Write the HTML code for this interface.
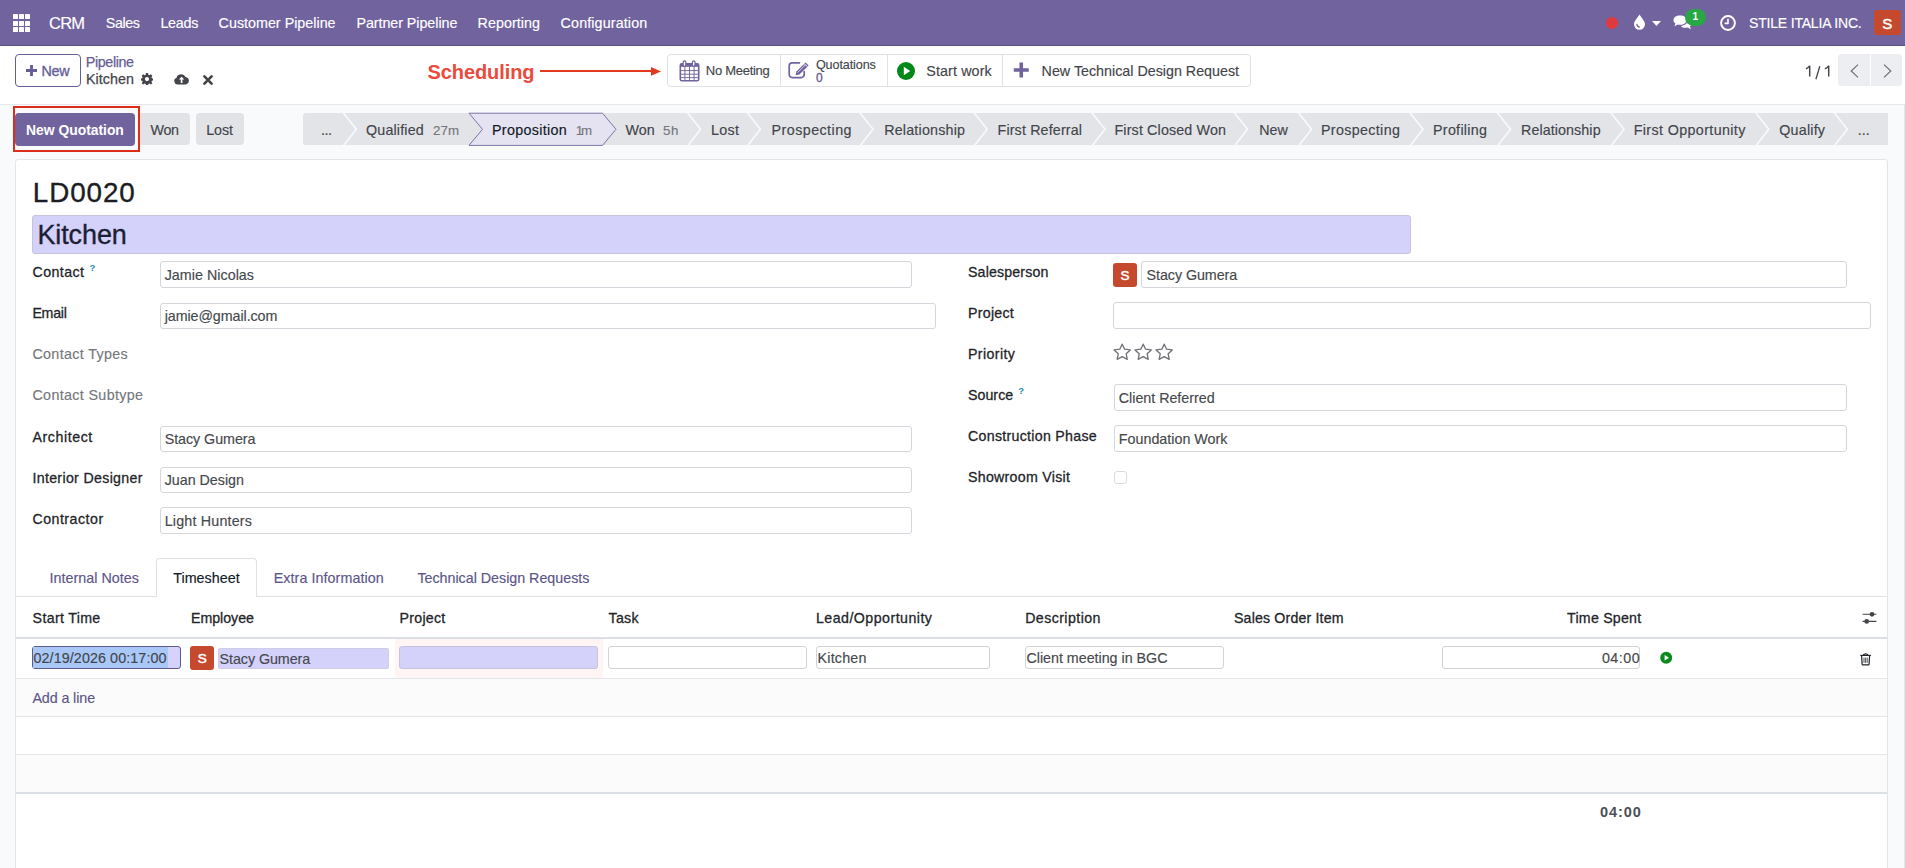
<!DOCTYPE html>
<html><head><meta charset="utf-8"><style>
html,body{margin:0;padding:0;}
body{width:1905px;height:868px;overflow:hidden;position:relative;background:#fff;font-family:"Liberation Sans",sans-serif;}
.t{position:absolute;white-space:nowrap;}
.r{position:absolute;box-sizing:border-box;}
svg{position:absolute;overflow:visible;}
</style></head><body>
<div class="r" style="left:0px;top:0px;width:1905px;height:46px;background:#71639e;"></div>
<div class="r" style="left:0px;top:45px;width:1905px;height:1px;background:#5b4f86;"></div>
<div class="r" style="left:13.0px;top:14.3px;width:4.9px;height:5.0px;background:#fff;border-radius:0.5px;"></div>
<div class="r" style="left:13.0px;top:20.5px;width:4.9px;height:5.0px;background:#fff;border-radius:0.5px;"></div>
<div class="r" style="left:13.0px;top:26.700000000000003px;width:4.9px;height:5.0px;background:#fff;border-radius:0.5px;"></div>
<div class="r" style="left:19.2px;top:14.3px;width:4.9px;height:5.0px;background:#fff;border-radius:0.5px;"></div>
<div class="r" style="left:19.2px;top:20.5px;width:4.9px;height:5.0px;background:#fff;border-radius:0.5px;"></div>
<div class="r" style="left:19.2px;top:26.700000000000003px;width:4.9px;height:5.0px;background:#fff;border-radius:0.5px;"></div>
<div class="r" style="left:25.4px;top:14.3px;width:4.9px;height:5.0px;background:#fff;border-radius:0.5px;"></div>
<div class="r" style="left:25.4px;top:20.5px;width:4.9px;height:5.0px;background:#fff;border-radius:0.5px;"></div>
<div class="r" style="left:25.4px;top:26.700000000000003px;width:4.9px;height:5.0px;background:#fff;border-radius:0.5px;"></div>
<div class="t" style="left:49.00px;top:14.83px;font-size:16.5px;line-height:16.5px;color:#fff;-webkit-text-stroke:0.15px #fff;letter-spacing:-0.788px;">CRM</div>
<div class="t" style="left:105.80px;top:15.90px;font-size:14.3px;line-height:14.3px;color:#fff;-webkit-text-stroke:0.15px #fff;letter-spacing:-0.443px;">Sales</div>
<div class="t" style="left:160.40px;top:15.90px;font-size:14.3px;line-height:14.3px;color:#fff;-webkit-text-stroke:0.15px #fff;letter-spacing:-0.241px;">Leads</div>
<div class="t" style="left:218.60px;top:15.90px;font-size:14.3px;line-height:14.3px;color:#fff;-webkit-text-stroke:0.15px #fff;letter-spacing:0.010px;">Customer Pipeline</div>
<div class="t" style="left:356.40px;top:15.90px;font-size:14.3px;line-height:14.3px;color:#fff;-webkit-text-stroke:0.15px #fff;letter-spacing:-0.050px;">Partner Pipeline</div>
<div class="t" style="left:477.60px;top:15.90px;font-size:14.3px;line-height:14.3px;color:#fff;-webkit-text-stroke:0.15px #fff;letter-spacing:0.049px;">Reporting</div>
<div class="t" style="left:560.60px;top:15.90px;font-size:14.3px;line-height:14.3px;color:#fff;-webkit-text-stroke:0.15px #fff;letter-spacing:0.128px;">Configuration</div>
<div class="r" style="left:1605.7px;top:16.6px;width:12px;height:12px;background:#e0393e;border-radius:50%;"></div>
<div class="t" style="left:1749.00px;top:15.95px;font-size:14px;line-height:14px;color:#fff;-webkit-text-stroke:0.15px #fff;letter-spacing:-0.185px;">STILE ITALIA INC.</div>
<div class="r" style="left:1874.4px;top:10.3px;width:26.4px;height:25.2px;background:#c5492c;border-radius:3px;"></div>
<div class="t" style="left:1882.30px;top:15.50px;font-size:15px;line-height:15px;color:#fff;-webkit-text-stroke:0.5px #fff;">S</div>
<div class="r" style="left:0px;top:46px;width:1905px;height:58px;background:#fff;"></div>
<div class="r" style="left:0px;top:104px;width:1905px;height:1px;background:#e5e7eb;"></div>
<div class="r" style="left:0px;top:105px;width:1905px;height:763px;background:#f9fafb;"></div>
<svg style="left:1633px;top:14px" width="13" height="16" viewBox="0 0 13 16"><path d="M6.5 0.5 C 8.5 4, 12 7, 12 10.3 A 5.5 5.5 0 0 1 1 10.3 C 1 7, 4.5 4, 6.5 0.5 Z" fill="#fff"/><path d="M4 10.5 A 2.6 2.6 0 0 0 6.2 13" stroke="#71639e" stroke-width="1.3" fill="none" stroke-linecap="round"/></svg>
<svg style="left:1652px;top:20.5px" width="9" height="5" viewBox="0 0 9 5"><path d="M0 0 L9 0 L4.5 5 Z" fill="#fff"/></svg>
<svg style="left:1672.5px;top:14.5px" width="19" height="15" viewBox="0 0 19 15"><path d="M7 0.5 C 11 0.5 13.5 2.6 13.5 5.2 C 13.5 7.8 11 9.8 7 9.8 C 6.2 9.8 5.5 9.7 4.8 9.5 L 1.5 11.2 L 2.4 8.4 C 1.2 7.5 0.5 6.4 0.5 5.2 C 0.5 2.6 3 0.5 7 0.5 Z" fill="#fff"/><path d="M14.5 4 C 17 4.8 18.5 6.4 18.5 8.4 C 18.5 9.5 18 10.5 17 11.3 L 17.8 14.2 L 14.6 12.6 C 14 12.8 13.3 12.8 12.6 12.8 C 10.5 12.8 8.8 12.1 7.8 10.9 C 11.8 10.7 14.7 8.4 14.7 5.3 Z" fill="#fff"/></svg>
<div class="r" style="left:1684.9px;top:8.9px;width:21.3px;height:17.4px;background:#28a745;border-radius:9px;"></div>
<div class="t" style="left:1692.40px;top:12.34px;font-size:10px;line-height:10px;color:#fff;font-weight:bold;">1</div>
<svg style="left:1719.5px;top:14.5px" width="16" height="16" viewBox="0 0 16 16"><circle cx="8" cy="8" r="6.9" stroke="#fff" stroke-width="2" fill="none"/><path d="M8 4.2 V8.4 H5.3" stroke="#fff" stroke-width="1.6" fill="none" stroke-linecap="round" stroke-linejoin="round"/></svg>
<div class="r" style="left:15.1px;top:54px;width:65.5px;height:32.9px;border:1px solid #665e96;border-radius:4px;background:#fff;"></div>
<svg style="left:26px;top:65px" width="11" height="11" viewBox="0 0 11 11"><path d="M5.5 0 V11 M0 5.5 H11" stroke="#665e96" stroke-width="2.9"/></svg>
<div class="t" style="left:41.60px;top:63.90px;font-size:14.3px;line-height:14.3px;color:#665e96;-webkit-text-stroke:0.35px #665e96;letter-spacing:-0.303px;">New</div>
<div class="t" style="left:85.80px;top:55.30px;font-size:14.3px;line-height:14.3px;color:#665e96;-webkit-text-stroke:0.25px #665e96;letter-spacing:-0.383px;">Pipeline</div>
<div class="t" style="left:86.00px;top:71.90px;font-size:14.3px;line-height:14.3px;color:#43454a;-webkit-text-stroke:0.25px #43454a;letter-spacing:0.051px;">Kitchen</div>
<svg style="left:140.9px;top:73.2px" width="12" height="12" viewBox="0 0 16 16"><path fill="#43454a" fill-rule="evenodd" d="M6.6 0 H9.4 L9.8 2.2 L11.3 2.9 L13.2 1.6 L15.2 3.6 L13.9 5.5 L14.5 7 L16 7.3 V9.9 L14.5 10.2 L13.9 11.6 L15.2 13.5 L13.3 15.4 L11.4 14.1 L9.9 14.7 L9.5 16 H6.6 L6.2 14.7 L4.7 14.1 L2.8 15.4 L0.9 13.5 L2.2 11.6 L1.6 10.2 L0 9.9 V7.3 L1.6 7 L2.2 5.5 L0.9 3.6 L2.9 1.6 L4.8 2.9 L6.3 2.2 Z M8 5.3 A2.8 2.8 0 1 0 8 10.9 A2.8 2.8 0 1 0 8 5.3 Z"/></svg>
<svg style="left:173.8px;top:72.8px" width="15.2" height="11.4" viewBox="0 0 15.2 11.4"><path fill="#43454a" d="M3.4 11.4 A3.3 3.3 0 0 1 2.4 5 A5 5 0 0 1 11.6 3.9 A3.8 3.8 0 0 1 11.8 11.4 Z"/><path d="M7.6 10 V5.6" stroke="#fff" stroke-width="1.7"/><path d="M4.9 6.6 L7.6 3.7 L10.3 6.6 Z" fill="#fff"/></svg>
<svg style="left:202.5px;top:74.8px" width="10" height="10" viewBox="0 0 10 10"><path d="M1.4 1.4 L8.6 8.6 M8.6 1.4 L1.4 8.6" stroke="#43454a" stroke-width="2.7" stroke-linecap="round"/></svg>
<div class="t" style="left:427.50px;top:61.97px;font-size:20px;line-height:20px;color:#ea4b3c;font-weight:bold;letter-spacing:-0.087px;">Scheduling</div>
<div class="r" style="left:540px;top:70.0px;width:112px;height:1.8px;background:#e5391f;"></div>
<svg style="left:650.5px;top:66.5px" width="10" height="8.8" viewBox="0 0 10 8.8"><path d="M0 0 L10 4.4 L0 8.8 Z" fill="#e5391f"/></svg>
<div class="r" style="left:667.2px;top:54.4px;width:583.6px;height:32.2px;border:1px solid #dfe1e5;border-radius:4px;background:#fff;"></div>
<div class="r" style="left:780px;top:55px;width:1px;height:31px;background:#dfe1e5;"></div>
<div class="r" style="left:887px;top:55px;width:1px;height:31px;background:#dfe1e5;"></div>
<div class="r" style="left:1002px;top:55px;width:1px;height:31px;background:#dfe1e5;"></div>
<svg style="left:679px;top:59.5px" width="21" height="22" viewBox="0 0 21 22"><rect x="1.3" y="3.8" width="18.4" height="17" rx="1.6" fill="#fff" stroke="#71639e" stroke-width="1.6"/><rect x="1.3" y="3.8" width="18.4" height="3" fill="#71639e"/><path d="M1.3 10.6 H19.7 M1.3 14.2 H19.7 M1.3 17.6 H19.7 M5.9 6.5 V20.8 M10.5 6.5 V20.8 M15.1 6.5 V20.8" stroke="#71639e" stroke-width="0.95"/><rect x="4.2" y="0.8" width="2.6" height="5.6" rx="1.3" fill="#fff" stroke="#71639e" stroke-width="1.2"/><rect x="13.4" y="0.8" width="2.6" height="5.6" rx="1.3" fill="#fff" stroke="#71639e" stroke-width="1.2"/></svg>
<div class="t" style="left:705.80px;top:64.20px;font-size:13px;line-height:13px;color:#43454a;-webkit-text-stroke:0.15px #43454a;letter-spacing:-0.275px;">No Meeting</div>
<svg style="left:788px;top:61px" width="22" height="18" viewBox="0 0 22 18"><path d="M11.5 1.8 H4.2 A3 3 0 0 0 1.2 4.8 V13.6 A3 3 0 0 0 4.2 16.6 H13.2 A3 3 0 0 0 16.2 13.6 V10.5" fill="none" stroke="#71639e" stroke-width="1.7" stroke-linecap="round"/><path d="M7.6 14.2 L8.4 10.6 L17.6 1.4 L20.6 4.4 L11.4 13.6 Z" fill="#71639e"/><path d="M9.6 11.6 L17.4 3.8" stroke="#fff" stroke-width="0.7"/><path d="M16.3 2.7 L19.3 5.7" stroke="#fff" stroke-width="0.9"/></svg>
<div class="t" style="left:815.90px;top:58.63px;font-size:12.6px;line-height:12.6px;color:#43454a;-webkit-text-stroke:0.15px #43454a;letter-spacing:-0.104px;">Quotations</div>
<div class="t" style="left:816.10px;top:71.64px;font-size:12px;line-height:12px;color:#665e96;-webkit-text-stroke:0.35px #665e96;">0</div>
<svg style="left:897px;top:61.6px" width="18" height="18" viewBox="0 0 18 18"><circle cx="9" cy="9" r="9" fill="#008818"/><path d="M6.8 4.8 L13.2 9 L6.8 13.2 Z" fill="#fff"/></svg>
<div class="t" style="left:926.30px;top:63.90px;font-size:14.3px;line-height:14.3px;color:#43454a;-webkit-text-stroke:0.15px #43454a;letter-spacing:0.115px;">Start work</div>
<svg style="left:1012.7px;top:62px" width="16.5" height="16" viewBox="0 0 16 16"><path d="M8 0.5 V15.5 M0.5 8 H15.5" stroke="#71639e" stroke-width="3.6"/></svg>
<div class="t" style="left:1041.60px;top:63.90px;font-size:14.3px;line-height:14.3px;color:#43454a;-webkit-text-stroke:0.15px #43454a;letter-spacing:-0.006px;">New Technical Design Request</div>
<svg style="left:1805px;top:65.5px" width="26" height="14" viewBox="0 0 26 14"><path d="M4.7 10.6 V0.3 H4.2 C3.6 1.6 2.4 2.4 0.9 2.8" stroke="#43454a" stroke-width="1.45" fill="none" stroke-linejoin="round"/><path d="M14.8 0.3 L10.9 13.2" stroke="#43454a" stroke-width="1.3"/><path d="M23.7 10.6 V0.3 H23.2 C22.6 1.6 21.4 2.4 19.9 2.8" stroke="#43454a" stroke-width="1.45" fill="none" stroke-linejoin="round"/></svg>
<div class="r" style="left:1838.4px;top:54.3px;width:31.2px;height:32.2px;background:#eceef1;border-radius:4px 0 0 4px;"></div>
<div class="r" style="left:1871px;top:54.3px;width:30.7px;height:32.2px;background:#eceef1;border-radius:0 4px 4px 0;"></div>
<svg style="left:1850px;top:64px" width="9" height="14" viewBox="0 0 9 14"><path d="M8 0.7 L1.2 7 L8 13.3" stroke="#6b6f76" stroke-width="1.15" fill="none"/></svg>
<svg style="left:1882.5px;top:64px" width="9" height="14" viewBox="0 0 9 14"><path d="M1 0.7 L7.8 7 L1 13.3" stroke="#6b6f76" stroke-width="1.15" fill="none"/></svg>
<div class="r" style="left:1904px;top:104px;width:1px;height:764px;background:#e5e7eb;"></div>
<div class="r" style="left:13.1px;top:106.2px;width:126.6px;height:45.4px;border:2px solid #dc2d1a;"></div>
<div class="r" style="left:15.2px;top:113px;width:119.4px;height:33px;background:#71639e;border-radius:4px;"></div>
<div class="t" style="left:26.10px;top:123.53px;font-size:13.9px;line-height:13.9px;color:#fff;font-weight:bold;letter-spacing:-0.022px;">New Quotation</div>
<div class="r" style="left:140.3px;top:113.1px;width:50.1px;height:32.4px;background:#e1e3e7;border-radius:0 4px 4px 0;"></div>
<div class="t" style="left:150.50px;top:123.20px;font-size:14.3px;line-height:14.3px;color:#43454a;-webkit-text-stroke:0.15px #43454a;letter-spacing:-0.323px;">Won</div>
<div class="r" style="left:195.6px;top:113.1px;width:48.9px;height:32.4px;background:#e1e3e7;border-radius:4px;"></div>
<div class="t" style="left:206.20px;top:123.20px;font-size:14.3px;line-height:14.3px;color:#43454a;-webkit-text-stroke:0.15px #43454a;letter-spacing:-0.077px;">Lost</div>
<div class="r" style="left:302.8px;top:113.2px;width:1585.2px;height:32.2px;background:#e2e4e8;border-radius:3px 0 0 3px;"></div>
<svg style="left:0;top:0" width="1905" height="868"><polygon points="469,113.2 602.5,113.2 616,129.3 602.5,145.4 469,145.4 482.5,129.3" fill="#e5e3f1" stroke="#7e74a8" stroke-width="1"/><polyline points="342.8,112.2 356.3,129.3 342.8,146.4" fill="none" stroke="#f9fafb" stroke-width="1.6"/><polyline points="687.1,112.2 700.6,129.3 687.1,146.4" fill="none" stroke="#f9fafb" stroke-width="1.6"/><polyline points="746.9,112.2 760.4,129.3 746.9,146.4" fill="none" stroke="#f9fafb" stroke-width="1.6"/><polyline points="859.5,112.2 873,129.3 859.5,146.4" fill="none" stroke="#f9fafb" stroke-width="1.6"/><polyline points="973.7,112.2 987.2,129.3 973.7,146.4" fill="none" stroke="#f9fafb" stroke-width="1.6"/><polyline points="1091.5,112.2 1105,129.3 1091.5,146.4" fill="none" stroke="#f9fafb" stroke-width="1.6"/><polyline points="1234.0,112.2 1247.5,129.3 1234.0,146.4" fill="none" stroke="#f9fafb" stroke-width="1.6"/><polyline points="1298.1,112.2 1311.6,129.3 1298.1,146.4" fill="none" stroke="#f9fafb" stroke-width="1.6"/><polyline points="1409.5,112.2 1423,129.3 1409.5,146.4" fill="none" stroke="#f9fafb" stroke-width="1.6"/><polyline points="1497.0,112.2 1510.5,129.3 1497.0,146.4" fill="none" stroke="#f9fafb" stroke-width="1.6"/><polyline points="1610.5,112.2 1624,129.3 1610.5,146.4" fill="none" stroke="#f9fafb" stroke-width="1.6"/><polyline points="1755.3,112.2 1768.8,129.3 1755.3,146.4" fill="none" stroke="#f9fafb" stroke-width="1.6"/><polyline points="1833.8,112.2 1847.3,129.3 1833.8,146.4" fill="none" stroke="#f9fafb" stroke-width="1.6"/></svg>
<div class="t" style="left:321.00px;top:123.20px;font-size:14.3px;line-height:14.3px;color:#43454a;-webkit-text-stroke:0.15px #43454a;letter-spacing:-0.460px;">...</div>
<div class="t" style="left:366.00px;top:123.20px;font-size:14.3px;line-height:14.3px;color:#43454a;-webkit-text-stroke:0.15px #43454a;letter-spacing:0.158px;">Qualified</div>
<div class="t" style="left:433.00px;top:124.04px;font-size:13.3px;line-height:13.3px;color:#75777b;-webkit-text-stroke:0.15px #75777b;letter-spacing:0.163px;">27m</div>
<div class="t" style="left:492.00px;top:123.20px;font-size:14.3px;line-height:14.3px;color:#111827;-webkit-text-stroke:0.15px #111827;letter-spacing:0.316px;">Proposition</div>
<div class="t" style="left:575.70px;top:124.04px;font-size:13.3px;line-height:13.3px;color:#75777b;-webkit-text-stroke:0.15px #75777b;letter-spacing:-1.977px;">1m</div>
<div class="t" style="left:625.60px;top:123.20px;font-size:14.3px;line-height:14.3px;color:#43454a;-webkit-text-stroke:0.15px #43454a;letter-spacing:-0.073px;">Won</div>
<div class="t" style="left:663.00px;top:124.04px;font-size:13.3px;line-height:13.3px;color:#75777b;-webkit-text-stroke:0.15px #75777b;letter-spacing:0.706px;">5h</div>
<div class="t" style="left:711.00px;top:123.20px;font-size:14.3px;line-height:14.3px;color:#43454a;-webkit-text-stroke:0.15px #43454a;letter-spacing:0.290px;">Lost</div>
<div class="t" style="left:771.60px;top:123.20px;font-size:14.3px;line-height:14.3px;color:#43454a;-webkit-text-stroke:0.15px #43454a;letter-spacing:0.438px;">Prospecting</div>
<div class="t" style="left:884.20px;top:123.20px;font-size:14.3px;line-height:14.3px;color:#43454a;-webkit-text-stroke:0.15px #43454a;letter-spacing:0.191px;">Relationship</div>
<div class="t" style="left:997.50px;top:123.20px;font-size:14.3px;line-height:14.3px;color:#43454a;-webkit-text-stroke:0.15px #43454a;letter-spacing:0.144px;">First Referral</div>
<div class="t" style="left:1114.50px;top:123.20px;font-size:14.3px;line-height:14.3px;color:#43454a;-webkit-text-stroke:0.15px #43454a;letter-spacing:0.140px;">First Closed Won</div>
<div class="t" style="left:1259.20px;top:123.20px;font-size:14.3px;line-height:14.3px;color:#43454a;-webkit-text-stroke:0.15px #43454a;letter-spacing:-0.003px;">New</div>
<div class="t" style="left:1321.00px;top:123.20px;font-size:14.3px;line-height:14.3px;color:#43454a;-webkit-text-stroke:0.15px #43454a;letter-spacing:0.338px;">Prospecting</div>
<div class="t" style="left:1433.00px;top:123.20px;font-size:14.3px;line-height:14.3px;color:#43454a;-webkit-text-stroke:0.15px #43454a;letter-spacing:0.292px;">Profiling</div>
<div class="t" style="left:1521.00px;top:123.20px;font-size:14.3px;line-height:14.3px;color:#43454a;-webkit-text-stroke:0.15px #43454a;letter-spacing:0.082px;">Relationship</div>
<div class="t" style="left:1633.70px;top:123.20px;font-size:14.3px;line-height:14.3px;color:#43454a;-webkit-text-stroke:0.15px #43454a;letter-spacing:0.375px;">First Opportunity</div>
<div class="t" style="left:1779.30px;top:123.20px;font-size:14.3px;line-height:14.3px;color:#43454a;-webkit-text-stroke:0.15px #43454a;letter-spacing:0.199px;">Qualify</div>
<div class="t" style="left:1857.80px;top:123.20px;font-size:14.3px;line-height:14.3px;color:#43454a;-webkit-text-stroke:0.15px #43454a;letter-spacing:0.040px;">...</div>
<div class="r" style="left:15px;top:158.8px;width:1873px;height:760px;background:#fff;border:1px solid #e3e5e8;border-radius:3px;"></div>
<div class="t" style="left:32.80px;top:179.07px;font-size:27.8px;line-height:27.8px;color:#1a1d21;-webkit-text-stroke:0.35px #1a1d21;letter-spacing:0.924px;">LD0020</div>
<div class="r" style="left:32.3px;top:215.2px;width:1378.5px;height:39.2px;background:#d4d2fb;border-radius:3px;border:1px solid #c5c4dc;"></div>
<div class="t" style="left:37.40px;top:221.74px;font-size:27px;line-height:27px;color:#1c1f33;-webkit-text-stroke:0.35px #1c1f33;letter-spacing:-0.093px;">Kitchen</div>
<div class="t" style="left:32.60px;top:264.78px;font-size:14.2px;line-height:14.2px;color:#222428;-webkit-text-stroke:0.28px #222428;letter-spacing:0.394px;">Contact</div>
<div class="t" style="left:89.60px;top:263.46px;font-size:9.5px;line-height:9.5px;color:#1a8fb0;font-weight:bold;">?</div>
<div class="r" style="left:159.5px;top:261.1px;width:752.5px;height:27px;border:1px solid #d4d6db;border-radius:3px;background:#fff;"></div>
<div class="t" style="left:164.70px;top:268.10px;font-size:14.3px;line-height:14.3px;color:#46484c;-webkit-text-stroke:0.15px #46484c;letter-spacing:0.025px;">Jamie Nicolas</div>
<div class="t" style="left:32.40px;top:305.98px;font-size:14.2px;line-height:14.2px;color:#222428;-webkit-text-stroke:0.28px #222428;letter-spacing:-0.252px;">Email</div>
<div class="r" style="left:159.5px;top:302.5px;width:776.5px;height:26.5px;border:1px solid #d4d6db;border-radius:3px;background:#fff;"></div>
<div class="t" style="left:164.70px;top:308.50px;font-size:14.3px;line-height:14.3px;color:#46484c;-webkit-text-stroke:0.15px #46484c;letter-spacing:-0.082px;">jamie@gmail.com</div>
<div class="t" style="left:32.40px;top:347.40px;font-size:14.3px;line-height:14.3px;color:#75777b;-webkit-text-stroke:0.15px #75777b;letter-spacing:0.346px;">Contact Types</div>
<div class="t" style="left:32.40px;top:388.40px;font-size:14.3px;line-height:14.3px;color:#75777b;-webkit-text-stroke:0.15px #75777b;letter-spacing:0.355px;">Contact Subtype</div>
<div class="t" style="left:32.40px;top:429.98px;font-size:14.2px;line-height:14.2px;color:#222428;-webkit-text-stroke:0.28px #222428;letter-spacing:0.583px;">Architect</div>
<div class="r" style="left:159.5px;top:425.6px;width:752.5px;height:26.5px;border:1px solid #d4d6db;border-radius:3px;background:#fff;"></div>
<div class="t" style="left:164.70px;top:432.40px;font-size:14.3px;line-height:14.3px;color:#46484c;-webkit-text-stroke:0.15px #46484c;letter-spacing:-0.054px;">Stacy Gumera</div>
<div class="t" style="left:32.40px;top:470.98px;font-size:14.2px;line-height:14.2px;color:#222428;-webkit-text-stroke:0.28px #222428;letter-spacing:0.327px;">Interior Designer</div>
<div class="r" style="left:159.5px;top:466.5px;width:752.5px;height:26.5px;border:1px solid #d4d6db;border-radius:3px;background:#fff;"></div>
<div class="t" style="left:164.70px;top:473.40px;font-size:14.3px;line-height:14.3px;color:#46484c;-webkit-text-stroke:0.15px #46484c;letter-spacing:-0.020px;">Juan Design</div>
<div class="t" style="left:32.40px;top:511.98px;font-size:14.2px;line-height:14.2px;color:#222428;-webkit-text-stroke:0.28px #222428;letter-spacing:0.501px;">Contractor</div>
<div class="r" style="left:159.5px;top:507.4px;width:752.5px;height:26.5px;border:1px solid #d4d6db;border-radius:3px;background:#fff;"></div>
<div class="t" style="left:164.70px;top:514.30px;font-size:14.3px;line-height:14.3px;color:#46484c;-webkit-text-stroke:0.15px #46484c;letter-spacing:0.187px;">Light Hunters</div>
<div class="t" style="left:968.00px;top:265.38px;font-size:14.2px;line-height:14.2px;color:#222428;-webkit-text-stroke:0.28px #222428;letter-spacing:0.146px;">Salesperson</div>
<div class="r" style="left:1113.1px;top:263.3px;width:23.5px;height:23.3px;background:#c5492c;border-radius:3px;"></div>
<div class="t" style="left:1120.40px;top:268.97px;font-size:13.5px;line-height:13.5px;color:#fff;-webkit-text-stroke:0.5px #fff;">S</div>
<div class="r" style="left:1141.2px;top:261.2px;width:705.8px;height:26.5px;border:1px solid #d4d6db;border-radius:3px;background:#fff;"></div>
<div class="t" style="left:1146.50px;top:268.30px;font-size:14.3px;line-height:14.3px;color:#46484c;-webkit-text-stroke:0.15px #46484c;letter-spacing:-0.054px;">Stacy Gumera</div>
<div class="t" style="left:968.00px;top:306.38px;font-size:14.2px;line-height:14.2px;color:#222428;-webkit-text-stroke:0.28px #222428;letter-spacing:0.268px;">Project</div>
<div class="r" style="left:1113.1px;top:302.3px;width:757.7px;height:26.5px;border:1px solid #d4d6db;border-radius:3px;background:#fff;"></div>
<div class="t" style="left:968.00px;top:347.18px;font-size:14.2px;line-height:14.2px;color:#222428;-webkit-text-stroke:0.28px #222428;letter-spacing:0.403px;">Priority</div>
<svg style="left:1112.6px;top:342.6px" width="18.4" height="17.6" viewBox="0 0 24 23"><path d="M12 1.6 L15.2 8.1 L22.6 9.1 L17.2 14.1 L18.6 21.3 L12 17.8 L5.4 21.3 L6.8 14.1 L1.4 9.1 L8.8 8.1 Z" fill="none" stroke="#6f7176" stroke-width="1.75" stroke-linejoin="round"/></svg>
<svg style="left:1133.8999999999999px;top:342.6px" width="18.4" height="17.6" viewBox="0 0 24 23"><path d="M12 1.6 L15.2 8.1 L22.6 9.1 L17.2 14.1 L18.6 21.3 L12 17.8 L5.4 21.3 L6.8 14.1 L1.4 9.1 L8.8 8.1 Z" fill="none" stroke="#6f7176" stroke-width="1.75" stroke-linejoin="round"/></svg>
<svg style="left:1155.1999999999998px;top:342.6px" width="18.4" height="17.6" viewBox="0 0 24 23"><path d="M12 1.6 L15.2 8.1 L22.6 9.1 L17.2 14.1 L18.6 21.3 L12 17.8 L5.4 21.3 L6.8 14.1 L1.4 9.1 L8.8 8.1 Z" fill="none" stroke="#6f7176" stroke-width="1.75" stroke-linejoin="round"/></svg>
<div class="t" style="left:968.00px;top:387.88px;font-size:14.2px;line-height:14.2px;color:#222428;-webkit-text-stroke:0.28px #222428;letter-spacing:0.042px;">Source</div>
<div class="t" style="left:1018.30px;top:386.46px;font-size:9.5px;line-height:9.5px;color:#1a8fb0;font-weight:bold;">?</div>
<div class="r" style="left:1113.5px;top:384.3px;width:733.5px;height:26.3px;border:1px solid #d4d6db;border-radius:3px;background:#fff;"></div>
<div class="t" style="left:1118.80px;top:391.10px;font-size:14.3px;line-height:14.3px;color:#46484c;-webkit-text-stroke:0.15px #46484c;letter-spacing:-0.026px;">Client Referred</div>
<div class="t" style="left:968.00px;top:429.18px;font-size:14.2px;line-height:14.2px;color:#222428;-webkit-text-stroke:0.28px #222428;letter-spacing:0.287px;">Construction Phase</div>
<div class="r" style="left:1113.5px;top:425.3px;width:733.5px;height:26.3px;border:1px solid #d4d6db;border-radius:3px;background:#fff;"></div>
<div class="t" style="left:1118.80px;top:432.10px;font-size:14.3px;line-height:14.3px;color:#46484c;-webkit-text-stroke:0.15px #46484c;letter-spacing:0.005px;">Foundation Work</div>
<div class="t" style="left:968.00px;top:470.08px;font-size:14.2px;line-height:14.2px;color:#222428;-webkit-text-stroke:0.28px #222428;letter-spacing:0.278px;">Showroom Visit</div>
<div class="r" style="left:1113.5px;top:470.5px;width:13.2px;height:13.2px;border:1px solid #d8dbe0;border-radius:3px;background:#fff;"></div>
<div class="r" style="left:16px;top:596px;width:1871px;height:1px;background:#dee2e6;"></div>
<div class="r" style="left:156px;top:558.4px;width:100.5px;height:38.6px;background:#fff;border:1px solid #dee2e6;border-bottom:none;border-radius:4px 4px 0 0;"></div>
<div class="t" style="left:49.50px;top:571.10px;font-size:14.3px;line-height:14.3px;color:#5b5689;-webkit-text-stroke:0.15px #5b5689;letter-spacing:0.036px;">Internal Notes</div>
<div class="t" style="left:173.20px;top:571.10px;font-size:14.3px;line-height:14.3px;color:#111827;-webkit-text-stroke:0.15px #111827;letter-spacing:0.046px;">Timesheet</div>
<div class="t" style="left:273.70px;top:571.10px;font-size:14.3px;line-height:14.3px;color:#5b5689;-webkit-text-stroke:0.15px #5b5689;letter-spacing:0.070px;">Extra Information</div>
<div class="t" style="left:417.40px;top:571.10px;font-size:14.3px;line-height:14.3px;color:#5b5689;-webkit-text-stroke:0.15px #5b5689;letter-spacing:-0.020px;">Technical Design Requests</div>
<div class="t" style="left:32.60px;top:611.28px;font-size:14.2px;line-height:14.2px;color:#222428;-webkit-text-stroke:0.28px #222428;letter-spacing:0.333px;">Start Time</div>
<div class="t" style="left:191.00px;top:611.28px;font-size:14.2px;line-height:14.2px;color:#222428;-webkit-text-stroke:0.28px #222428;letter-spacing:-0.020px;">Employee</div>
<div class="t" style="left:399.50px;top:611.28px;font-size:14.2px;line-height:14.2px;color:#222428;-webkit-text-stroke:0.28px #222428;letter-spacing:0.268px;">Project</div>
<div class="t" style="left:608.60px;top:611.28px;font-size:14.2px;line-height:14.2px;color:#222428;-webkit-text-stroke:0.28px #222428;letter-spacing:0.268px;">Task</div>
<div class="t" style="left:816.00px;top:611.28px;font-size:14.2px;line-height:14.2px;color:#222428;-webkit-text-stroke:0.28px #222428;letter-spacing:0.471px;">Lead/Opportunity</div>
<div class="t" style="left:1025.20px;top:611.28px;font-size:14.2px;line-height:14.2px;color:#222428;-webkit-text-stroke:0.28px #222428;letter-spacing:0.427px;">Description</div>
<div class="t" style="left:1234.00px;top:611.28px;font-size:14.2px;line-height:14.2px;color:#222428;-webkit-text-stroke:0.28px #222428;letter-spacing:0.152px;">Sales Order Item</div>
<div class="t" style="left:1567.10px;top:611.28px;font-size:14.2px;line-height:14.2px;color:#222428;-webkit-text-stroke:0.28px #222428;letter-spacing:0.224px;">Time Spent</div>
<svg style="left:1862px;top:610px" width="15" height="14" viewBox="0 0 15 14"><path d="M0.6 4.3 H14.4 M0.6 11.4 H14.4" stroke="#43454a" stroke-width="1.1"/><circle cx="10" cy="4.3" r="2.4" fill="#43454a"/><circle cx="4.7" cy="11.4" r="2.4" fill="#43454a"/></svg>
<div class="r" style="left:16px;top:636.8px;width:1871px;height:2px;background:#dcdfe3;"></div>
<div class="r" style="left:16px;top:678px;width:1871px;height:1px;background:#e3e5e8;"></div>
<div class="r" style="left:394.5px;top:639px;width:208.3px;height:39px;background:#fff5f5;"></div>
<div class="r" style="left:32.3px;top:646.3px;width:148.3px;height:22.6px;background:#d5d3fb;border:1px solid #5d5a8c;border-radius:3px;"></div>
<div class="r" style="left:33.3px;top:647.3px;width:134.7px;height:20.6px;background:#a9c8f8;"></div>
<div class="t" style="left:33.50px;top:651.30px;font-size:14.3px;line-height:14.3px;color:#43454a;-webkit-text-stroke:0.15px #43454a;letter-spacing:0.099px;">02/19/2026 00:17:00</div>
<div class="r" style="left:190.3px;top:646.3px;width:23.7px;height:23.4px;background:#c5492c;border-radius:3px;"></div>
<div class="t" style="left:197.80px;top:651.97px;font-size:13.5px;line-height:13.5px;color:#fff;-webkit-text-stroke:0.5px #fff;">S</div>
<div class="r" style="left:218.4px;top:647.6px;width:170.2px;height:21.8px;background:#d4d2fb;border-radius:2px;border:1px solid #cfcde6;"></div>
<div class="t" style="left:219.50px;top:651.90px;font-size:14.3px;line-height:14.3px;color:#46484c;-webkit-text-stroke:0.15px #46484c;letter-spacing:-0.054px;">Stacy Gumera</div>
<div class="r" style="left:399px;top:646.3px;width:199px;height:22.4px;background:#d4d2fb;border-radius:3px;border:1px solid #c5c4dc;"></div>
<div class="r" style="left:608px;top:646.3px;width:198.5px;height:22.4px;border:1px solid #d0d3d8;border-radius:3px;background:#fff;"></div>
<div class="r" style="left:816px;top:646.3px;width:173.6px;height:22.4px;border:1px solid #d0d3d8;border-radius:3px;background:#fff;"></div>
<div class="t" style="left:817.50px;top:651.30px;font-size:14.3px;line-height:14.3px;color:#46484c;-webkit-text-stroke:0.15px #46484c;letter-spacing:0.217px;">Kitchen</div>
<div class="r" style="left:1025.2px;top:646.3px;width:198.5px;height:22.4px;border:1px solid #d0d3d8;border-radius:3px;background:#fff;"></div>
<div class="t" style="left:1026.50px;top:651.30px;font-size:14.3px;line-height:14.3px;color:#46484c;-webkit-text-stroke:0.15px #46484c;letter-spacing:-0.024px;">Client meeting in BGC</div>
<div class="r" style="left:1442.4px;top:646.3px;width:198px;height:22.4px;border:1px solid #d0d3d8;border-radius:3px;background:#fff;"></div>
<div class="t" style="left:1601.90px;top:651.20px;font-size:14.3px;line-height:14.3px;color:#46484c;-webkit-text-stroke:0.15px #46484c;letter-spacing:0.479px;">04:00</div>
<svg style="left:1659.8px;top:652px" width="13" height="13" viewBox="0 0 13 13"><circle cx="6.2" cy="5.8" r="6" fill="#0a8a1f"/><path d="M4.6 3.1 L9 5.8 L4.6 8.5 Z" fill="#fff"/></svg>
<svg style="left:1859.8px;top:653px" width="11.2" height="12.4" viewBox="0 0 11.2 12.4"><path d="M0.3 2.4 H10.9" stroke="#1f2328" stroke-width="1.2"/><path d="M3.4 2.2 C3.4 0.4 7.8 0.4 7.8 2.2" stroke="#1f2328" stroke-width="1.1" fill="none"/><path d="M1.6 2.6 L2.1 11.1 A0.8 0.8 0 0 0 2.9 11.8 H8.3 A0.8 0.8 0 0 0 9.1 11.1 L9.6 2.6" stroke="#1f2328" stroke-width="1.2" fill="none"/><path d="M4 4.6 V9.8 M5.6 4.6 V9.8 M7.2 4.6 V9.8" stroke="#1f2328" stroke-width="0.8"/></svg>
<div class="r" style="left:16px;top:679px;width:1871px;height:37.3px;background:#fbfbfb;"></div>
<div class="r" style="left:16px;top:716.3px;width:1871px;height:1px;background:#e3e5e8;"></div>
<div class="t" style="left:32.40px;top:691.20px;font-size:14.3px;line-height:14.3px;color:#5b5689;-webkit-text-stroke:0.15px #5b5689;letter-spacing:-0.100px;">Add a line</div>
<div class="r" style="left:16px;top:754.4px;width:1871px;height:1px;background:#e3e5e8;"></div>
<div class="r" style="left:16px;top:755.4px;width:1871px;height:37px;background:#fbfbfb;"></div>
<div class="r" style="left:16px;top:792.3px;width:1871px;height:2px;background:#dcdfe3;"></div>
<div class="t" style="left:1600.10px;top:804.93px;font-size:14.5px;line-height:14.5px;color:#4b5058;font-weight:bold;letter-spacing:0.929px;">04:00</div>
</body></html>
